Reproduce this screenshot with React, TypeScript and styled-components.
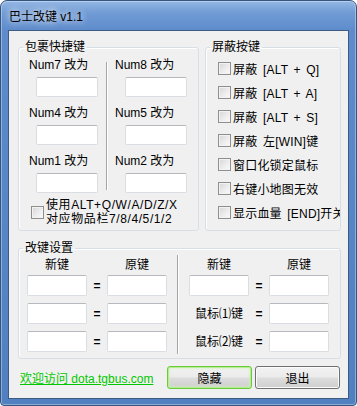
import React from "react";
import styled, { createGlobalStyle } from "styled-components";

const GlobalStyle = createGlobalStyle`
  html, body {
    margin: 0;
    padding: 0;
    background: #ffffff;
  }
  body {
    font-family: "Liberation Sans", "Noto Sans CJK SC", sans-serif;
    font-size: 12px;
    color: #000;
  }
  * {
    box-sizing: border-box;
  }
`;

const Window = styled.div`
  width: 357px;
  height: 406px;
  display: flex;
  flex-direction: column;
  border: 1px solid #34557f;
  border-radius: 7px 7px 4px 4px;
  padding: 0 7px 6px 7px;
  background: linear-gradient(
    180deg,
    #94b7e4 0px,
    #709bd4 12px,
    #5d8bcb 30px,
    #5585c5 60%,
    #5080bf 100%
  );
  box-shadow: inset 0 0 0 1px rgba(255, 255, 255, 0.35);
`;

const TitleBar = styled.div`
  height: 29px;
  display: flex;
  align-items: center;
  padding-left: 1px;
  font-size: 12px;
  color: #000;
  text-shadow: 0 0 6px rgba(255, 255, 255, 0.9), 0 0 10px rgba(255, 255, 255, 0.7);
`;

const Client = styled.div`
  flex: 1;
  display: flex;
  flex-direction: column;
  background: #f0f0f0;
  border: 1px solid #3d5b82;
  padding: 9px 7px 0 9px;
`;

const TopRow = styled.div`
  display: flex;
  gap: 6px;
  height: 191px;
`;

const Group = styled.fieldset<{ $width: number; $height?: number }>`
  margin: 0;
  padding: 0;
  min-width: 0;
  width: ${(p) => p.$width}px;
  height: ${(p) => (p.$height ? `${p.$height}px` : "100%")};
  border: 1px solid #d5dfe5;
  border-radius: 3px;
  box-shadow: inset 1px 1px 0 #ffffff;
  overflow: hidden;
`;

const Legend = styled.legend`
  margin-left: 4px;
  padding: 0 2px;
  font-size: 12px;
  line-height: 14px;
`;

const KeyColumns = styled.div`
  display: flex;
  padding-top: 4px;
`;

const KeyColumn = styled.div<{ $width: number; $pad: number; $inset: number }>`
  width: ${(p) => p.$width}px;
  padding-left: ${(p) => p.$pad}px;
  display: flex;
  flex-direction: column;
  gap: 9px;

  & input {
    margin-left: ${(p) => p.$inset}px;
  }
`;

const KeyCell = styled.div`
  display: flex;
  flex-direction: column;
  gap: 5px;
`;

const Label = styled.span`
  line-height: 14px;
  white-space: nowrap;
`;

const TextBox = styled.input<{ $w: number; $h: number }>`
  width: ${(p) => p.$w}px;
  height: ${(p) => p.$h}px;
  margin: 0;
  padding: 0 3px;
  border: 1px solid #dadde2;
  border-top-color: #b5b8bd;
  border-radius: 2px;
  background: #ffffff;
  font: inherit;
  outline: none;
`;

const VLine = styled.div<{ $height: number; $top: number; $margin: string }>`
  width: 1px;
  height: ${(p) => p.$height}px;
  margin: ${(p) => p.$margin};
  margin-top: ${(p) => p.$top}px;
  background: #a5a5a5;
  box-shadow: 1px 0 0 #ffffff;
  flex-shrink: 0;
`;

const Box = styled.span`
  width: 13px;
  height: 13px;
  flex-shrink: 0;
  border: 1px solid #8f8f8f;
  background: linear-gradient(135deg, #d6d6d6 0%, #eeeeee 60%, #fbfbfb 100%);
  box-shadow: inset 0 0 0 1px #f2f2f2;
`;

const CheckRow = styled.label<{ $pad: number; $gap: number }>`
  display: flex;
  align-items: center;
  gap: ${(p) => p.$gap}px;
  padding-left: ${(p) => p.$pad}px;
  white-space: nowrap;
`;

const ComboCheck = styled(CheckRow)`
  margin-top: 5px;
  line-height: 14px;

  & > span:last-child {
    letter-spacing: 0.6px;
  }
`;

const BlockList = styled.div`
  display: flex;
  flex-direction: column;
  padding-top: 2px;

  & > label {
    height: 24px;
    word-spacing: 2px;
    letter-spacing: 0.2px;
  }
`;

const RemapGroup = styled(Group)`
  margin-top: 10px;
`;

const Remap = styled.div`
  display: flex;
  padding: 3px 0 0 8px;
`;

const Half = styled.div`
  display: flex;
  flex-direction: column;
  gap: 3px;
`;

const Triple = styled.div<{ $gap?: number }>`
  display: grid;
  grid-template-columns: 60px 20px 60px;
  row-gap: ${(p) => p.$gap ?? 0}px;
  align-items: center;
  justify-items: center;
`;

const Head = styled.span`
  line-height: 14px;
`;

const Eq = styled.span`
  font-weight: bold;
  font-size: 12px;
`;

const Footer = styled.div`
  display: flex;
  align-items: center;
  margin-top: 7px;
  margin-right: 1px;
  height: 23px;
`;

const Link = styled.a`
  padding-left: 2px;
  color: #00c800;
  text-decoration: underline;
  white-space: nowrap;
`;

const Buttons = styled.div`
  display: flex;
  gap: 3px;
  margin-left: auto;
`;

const Button = styled.button<{ $default?: boolean }>`
  width: 85px;
  height: 23px;
  margin: 0;
  padding: 0;
  font: inherit;
  color: #000;
  border-radius: 3px;
  border: 1px solid ${(p) => (p.$default ? "#6acb3a" : "#707070")};
  background: linear-gradient(
    180deg,
    #f2f2f2 0%,
    #ebebeb 48%,
    #dddddd 52%,
    #cfcfcf 100%
  );
  box-shadow: ${(p) =>
    p.$default
      ? "inset 0 0 0 1px #b6ec92, inset 0 0 3px 1px #cdf2b4"
      : "inset 0 0 0 1px #fbfbfb"};
`;

const keyCols = [
  { width: 87, pad: 10, inset: 7, keys: ["Num7", "Num4", "Num1"] },
  { width: 90, pad: 8, inset: 10, keys: ["Num8", "Num5", "Num2"] },
];

const blocks = [
  "屏蔽 [ALT + Q]",
  "屏蔽 [ALT + A]",
  "屏蔽 [ALT + S]",
  "屏蔽 左[WIN]键",
  "窗口化锁定鼠标",
  "右键小地图无效",
  "显示血量 [END]开关",
];

export default function App() {
  return (
    <>
      <GlobalStyle />
      <Window>
        <TitleBar>巴士改键 v1.1</TitleBar>
        <Client>
          <TopRow>
            <Group $width={181}>
              <Legend>包裹快捷键</Legend>
              <KeyColumns>
                <KeyColumn $width={keyCols[0].width} $pad={keyCols[0].pad} $inset={keyCols[0].inset}>
                  {keyCols[0].keys.map((k) => (
                    <KeyCell key={k}>
                      <Label>{k} 改为</Label>
                      <TextBox $w={62} $h={20} />
                    </KeyCell>
                  ))}
                </KeyColumn>
                <VLine $height={128} $top={4} $margin="0" />
                <KeyColumn $width={keyCols[1].width} $pad={keyCols[1].pad} $inset={keyCols[1].inset}>
                  {keyCols[1].keys.map((k) => (
                    <KeyCell key={k}>
                      <Label>{k} 改为</Label>
                      <TextBox $w={62} $h={20} />
                    </KeyCell>
                  ))}
                </KeyColumn>
              </KeyColumns>
              <ComboCheck $pad={12} $gap={2}>
                <Box />
                <span>
                  使用ALT+Q/W/A/D/Z/X
                  <br />
                  对应物品栏7/8/4/5/1/2
                </span>
              </ComboCheck>
            </Group>
            <Group $width={136}>
              <Legend>屏蔽按键</Legend>
              <BlockList>
                {blocks.map((b) => (
                  <CheckRow key={b} $pad={12} $gap={2}>
                    <Box />
                    <span>{b}</span>
                  </CheckRow>
                ))}
              </BlockList>
            </Group>
          </TopRow>

          <RemapGroup $width={323} $height={118}>
            <Legend>改键设置</Legend>
            <Remap>
              <Half>
                <Triple>
                  <Head>新键</Head>
                  <span />
                  <Head>原键</Head>
                </Triple>
                <Triple $gap={7}>
                  {[0, 1, 2].map((i) => (
                    <React.Fragment key={i}>
                      <TextBox $w={60} $h={21} />
                      <Eq>=</Eq>
                      <TextBox $w={60} $h={21} />
                    </React.Fragment>
                  ))}
                </Triple>
              </Half>
              <VLine $height={103} $top={-7} $margin="0 11px 0 10px" />
              <Half>
                <Triple>
                  <Head>新键</Head>
                  <span />
                  <Head>原键</Head>
                </Triple>
                <Triple $gap={7}>
                  <TextBox $w={60} $h={21} />
                  <Eq>=</Eq>
                  <TextBox $w={60} $h={21} />
                  <Label>鼠标⑴键</Label>
                  <Eq>=</Eq>
                  <TextBox $w={60} $h={21} />
                  <Label>鼠标⑵键</Label>
                  <Eq>=</Eq>
                  <TextBox $w={60} $h={21} />
                </Triple>
              </Half>
            </Remap>
          </RemapGroup>

          <Footer>
            <Link href="#">欢迎访问 dota.tgbus.com</Link>
            <Buttons>
              <Button $default>隐藏</Button>
              <Button>退出</Button>
            </Buttons>
          </Footer>
        </Client>
      </Window>
    </>
  );
}
